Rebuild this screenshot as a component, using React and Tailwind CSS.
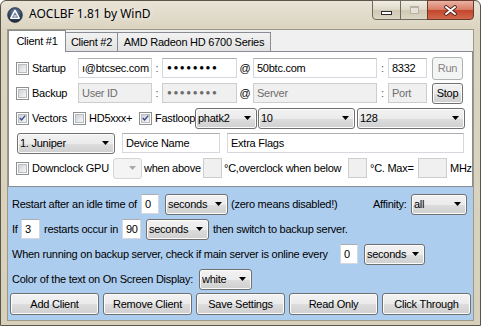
import React from 'react';

const btnBg =
  'border-[#707070] bg-[linear-gradient(to_bottom,#f2f2f2_0%,#ebebeb_50%,#dddddd_51%,#cfcfcf_100%)] shadow-[inset_0_0_0_1px_#fcfcfc]';

function Check({ checked }) {
  return (
    <span className="w-[13px] h-[13px] shrink-0 border border-[#8e8f8f] bg-white flex items-center justify-center">
      <span className="w-[9px] h-[9px] border border-[#b9bcc0] bg-[linear-gradient(135deg,#cfd2d6,#f6f6f6)] flex items-center justify-center">
        {checked && (
          <svg width="9" height="8" viewBox="0 0 9 8" className="-mt-px">
            <path d="M1 4l2.3 2.6L8 1" stroke="#33498a" strokeWidth="1.7" fill="none" />
          </svg>
        )}
      </span>
    </span>
  );
}

function Field({ w, value, disabled, pass, className = '' }) {
  return (
    <div
      className={`${w} h-[20px] shrink-0 border flex items-center px-[3px] overflow-hidden whitespace-nowrap ${
        disabled
          ? 'bg-[#f0f0f0] border-[#cdcdcd] text-[#6d6d6d]'
          : 'bg-white border-[#d5d8de] border-t-[#abadb3] text-black'
      } ${className}`}
    >
      {pass ? (
        <span className="text-[8px] tracking-[1.6px] leading-none pl-[1px]">●●●●●●●●</span>
      ) : (
        value
      )}
    </div>
  );
}

function Drop({ w, value, disabled, className = '' }) {
  return (
    <div
      className={`${w} h-[21px] shrink-0 rounded-[3px] border flex items-center pl-[2px] pr-[5px] ${
        disabled ? 'border-[#d5d5d5] bg-[#f4f4f4]' : btnBg
      } ${className}`}
    >
      <span className="flex-1 truncate">{value}</span>
      <svg width="7" height="4" viewBox="0 0 7 4">
        <path d="M0 0h7L3.5 4z" fill={disabled ? '#a8a8a8' : '#000'} />
      </svg>
    </div>
  );
}

function Btn({ children, className = '', disabled }) {
  return (
    <div
      className={`shrink-0 rounded-[3px] border flex items-center justify-center ${
        disabled ? 'border-[#adb2b5] bg-[#f4f4f4] text-[#838383]' : btnBg
      } ${className}`}
    >
      {children}
    </div>
  );
}

function TitleBar() {
  return (
    <div className="h-[28px] shrink-0 flex items-start">
      <svg className="ml-[6px] mt-[6px]" width="16" height="16" viewBox="0 0 16 16">
        <defs>
          <radialGradient id="ic" cx="50%" cy="35%" r="65%">
            <stop offset="0" stopColor="#7690b4" />
            <stop offset="1" stopColor="#111d30" />
          </radialGradient>
        </defs>
        <circle cx="8" cy="8" r="7.4" fill="url(#ic)" stroke="#3a4350" strokeWidth="0.8" />
        <path d="M8 3.4L12.2 11.2H3.8Z" fill="none" stroke="#fff" strokeWidth="1.5" strokeLinejoin="round" />
        <path d="M6.4 9h3.2" stroke="#fff" strokeWidth="1.2" />
      </svg>
      <span className="ml-[6px] mt-[5px] font-['Noto_Sans',sans-serif] text-[12px] tracking-normal leading-[15px] [text-shadow:0_0_6px_#fff]">
        AOCLBF 1.81 by WinD
      </span>
      <div className="ml-auto mr-[6px] -mt-px flex h-[20px]">
        <div className="w-[29px] h-full rounded-bl-[4px] border border-[#6f6a5e] bg-[linear-gradient(to_bottom,#f1eee6,#ddd7c6_50%,#cfc8b3_51%,#dcd6c4)] flex items-end justify-center pb-[4px]">
          <div className="w-[11px] h-[4px] border border-[#2d2d2d] bg-white" />
        </div>
        <div className="w-[28px] h-full -ml-px border border-[#6f6a5e] bg-[linear-gradient(to_bottom,#f1eee6,#ddd7c6_50%,#cfc8b3_51%,#dcd6c4)] flex items-center justify-center">
          <div className="w-[9px] h-[8px] border border-[#b8b2a2] border-t-[2px] bg-[#e6e2d7]" />
        </div>
        <div className="w-[47px] h-full -ml-px rounded-br-[4px] border border-[#6b3a2c] bg-[linear-gradient(to_bottom,#eab3a5,#d77a62_50%,#c4452c_51%,#d0684c)] flex items-center justify-center">
          <svg width="15" height="11" viewBox="0 0 15 11">
            <path d="M3 2l9 7M12 2l-9 7" stroke="#4a2018" strokeWidth="3.6" strokeLinecap="round" />
            <path d="M3 2l9 7M12 2l-9 7" stroke="#fff" strokeWidth="2" strokeLinecap="round" />
          </svg>
        </div>
      </div>
    </div>
  );
}

function Tabs() {
  return (
    <div className="h-[21px] shrink-0 flex items-end">
      <div className="relative z-10 w-[58px] h-[22px] -mb-px border border-b-0 border-[#898c95] bg-white flex items-center justify-center pb-[1px]">
        Client #1
      </div>
      <div className="w-[52px] h-[19px] border border-b-0 border-l-0 border-[#898c95] bg-[linear-gradient(to_bottom,#f2f2f2,#e3e3e3)] flex items-center justify-center">
        Client #2
      </div>
      <div className="w-[153px] h-[19px] border border-b-0 border-l-0 border-[#898c95] bg-[linear-gradient(to_bottom,#f2f2f2,#e3e3e3)] flex items-center justify-center">
        AMD Radeon HD 6700 Series
      </div>
    </div>
  );
}

function ClientPage() {
  return (
    <div className="h-[136px] shrink-0 border border-[#898c95] bg-white pl-[7px] pt-[6px] flex flex-col gap-[5px]">
      <div className="flex items-center h-[20px]">
        <label className="w-[62px] shrink-0 flex items-center gap-[3px]">
          <Check />
          <span>Startup</span>
        </label>
        <Field w="w-[74px]" value="ı@btcsec.com" className="px-[1px]" />
        <span className="w-[10px] text-center text-[#555]">:</span>
        <Field w="w-[75px]" pass />
        <span className="w-[16px] text-center">@</span>
        <Field w="w-[124px]" value="50btc.com" />
        <span className="w-[11px] text-center text-[#555]">:</span>
        <Field w="w-[39px]" value="8332" />
        <Btn disabled className="ml-[5px] w-[31px] h-[23px]">
          Run
        </Btn>
      </div>
      <div className="flex items-center h-[20px]">
        <label className="w-[62px] shrink-0 flex items-center gap-[3px]">
          <Check />
          <span>Backup</span>
        </label>
        <Field w="w-[74px]" disabled value="User ID" />
        <span className="w-[10px] text-center text-[#555]">:</span>
        <Field w="w-[75px]" disabled pass />
        <span className="w-[16px] text-center">@</span>
        <Field w="w-[124px]" disabled value="Server" />
        <span className="w-[11px] text-center text-[#555]">:</span>
        <Field w="w-[39px]" disabled value="Port" />
        <Btn className="ml-[5px] w-[31px] h-[21px]">Stop</Btn>
      </div>
      <div className="flex items-center h-[20px]">
        <label className="w-[57px] shrink-0 flex items-center gap-[3px]">
          <Check checked />
          <span>Vectors</span>
        </label>
        <label className="w-[66px] shrink-0 flex items-center gap-[3px]">
          <Check />
          <span>HD5xxx+</span>
        </label>
        <label className="w-[56px] shrink-0 flex items-center gap-[3px]">
          <Check checked />
          <span>Fastloop</span>
        </label>
        <Drop w="w-[62px]" value="phatk2" />
        <Drop w="w-[97px]" value="10" className="ml-[1px]" />
        <Drop w="w-[108px]" value="128" className="ml-[2px]" />
      </div>
      <div className="flex items-center h-[20px]">
        <Drop w="w-[98px]" value="1. Juniper" className="ml-[1px]" />
        <Field w="w-[98px]" value="Device Name" className="ml-[7px]" />
        <Field w="w-[237px]" value="Extra Flags" className="ml-[7px]" />
      </div>
      <div className="flex items-center h-[20px] whitespace-nowrap">
        <label className="w-[97px] shrink-0 flex items-center gap-[3px]">
          <Check />
          <span>Downclock GPU</span>
        </label>
        <Drop w="w-[29px]" disabled value="" />
        <span className="w-[61px] shrink-0 pl-[2px]">when above</span>
        <Field w="w-[19px]" disabled value="" />
        <span className="w-[126px] shrink-0 pl-[2px]">°C,overclock when below</span>
        <Field w="w-[19px]" disabled value="" />
        <span className="w-[51px] shrink-0 pl-[3px]">°C. Max=</span>
        <Field w="w-[29px]" disabled value="" />
        <span className="pl-[3px]">MHz</span>
      </div>
    </div>
  );
}

function Options() {
  return (
    <div className="flex-1 bg-[#adcdef] flex flex-col pt-[7px] whitespace-nowrap">
      <div className="pl-[4px] flex flex-col gap-[5px]">
        <div className="flex items-center h-[20px]">
          <span className="w-[129px] shrink-0">Restart after an idle time of</span>
          <Field w="w-[18px]" value="0" />
          <Drop w="w-[63px]" value="seconds" className="ml-[6px]" />
          <span className="w-[145px] shrink-0 pl-[3px]">(zero means disabled!)</span>
          <span className="w-[38px] shrink-0">Affinity:</span>
          <Drop w="w-[56px]" value="all" />
        </div>
        <div className="flex items-center h-[20px]">
          <span className="w-[9px] shrink-0">If</span>
          <Field w="w-[19px]" value="3" />
          <span className="w-[82px] shrink-0 pl-[4px]">restarts occur in</span>
          <Field w="w-[19px]" value="90" />
          <Drop w="w-[63px]" value="seconds" className="ml-[5px]" />
          <span className="pl-[4px]">then switch to backup server.</span>
        </div>
        <div className="flex items-center h-[20px]">
          <span className="w-[328px] shrink-0">
            When running on backup server, check if main server is online every
          </span>
          <Field w="w-[18px]" value="0" />
          <Drop w="w-[61px]" value="seconds" className="ml-[6px]" />
        </div>
        <div className="flex items-center h-[20px]">
          <span className="w-[187px] shrink-0">Color of the text on On Screen Display:</span>
          <Drop w="w-[53px]" value="white" />
        </div>
      </div>
      <div className="mt-[4px] pl-[2px] flex gap-[4px]">
        {['Add Client', 'Remove Client', 'Save Settings', 'Read Only', 'Click Through'].map((t) => (
          <Btn key={t} className="w-[89px] h-[22px]">
            {t}
          </Btn>
        ))}
      </div>
    </div>
  );
}

export default function App() {
  return (
    <div className="w-[481px] h-[326px] bg-white font-['Liberation_Sans',Arial,sans-serif] text-[11px] tracking-[-0.25px] text-black">
      <div className="w-full h-full flex flex-col border border-[#59554b] rounded-t-[6px] bg-[linear-gradient(to_bottom,#e8e3d6,#dbd4c0_28px,#d7d0bb)]">
        <TitleBar />
        <div className="mx-[6px] h-[292px] shrink-0 border border-[#9f9884] bg-[#f0f0f0] flex flex-col">
          <Tabs />
          <ClientPage />
          <Options />
        </div>
      </div>
    </div>
  );
}
